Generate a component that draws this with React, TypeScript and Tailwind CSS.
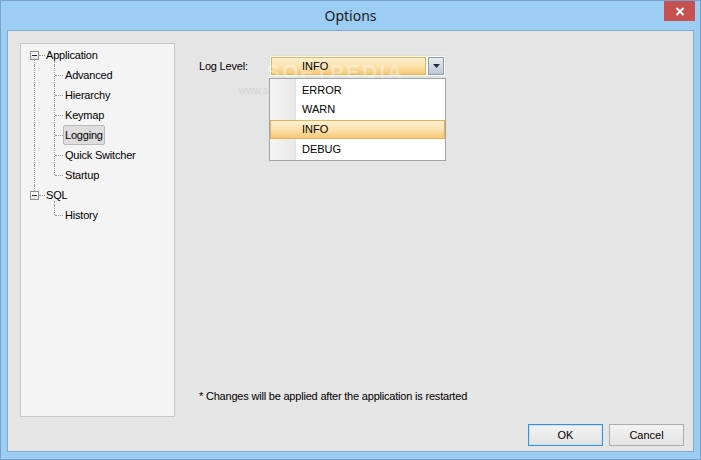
import React from "react";

const font = { fontFamily: '"Liberation Sans", Arial, sans-serif' };

function Expander() {
  return (
    <span className="absolute left-[9px] top-[6px] w-[9px] h-[9px] border border-[#919191] bg-linear-to-b from-white to-[#e4e4e4] flex items-center justify-center">
      <span className="block w-[5px] h-px bg-[#2b2b2b]" />
    </span>
  );
}

type RowProps = {
  label: string;
  root?: boolean;
  rootLine?: "below" | "full" | "above" | "none";
  childLine?: "below" | "full" | "above" | "none";
  selected?: boolean;
};

function Row({ label, root, rootLine = "none", childLine = "none", selected }: RowProps) {
  const vline = (left: string, kind: string) => {
    if (kind === "none") return null;
    const cls =
      kind === "full"
        ? "top-0 h-[20px]"
        : kind === "below"
        ? "top-[16px] h-[4px]"
        : "top-0 h-[10px]";
    return <span className={`absolute ${left} ${cls} w-0 border-l border-dotted border-[#9a9a9a]`} />;
  };
  const rootAbove = rootLine === "above";
  return (
    <div className="relative h-[20px]">
      {rootAbove ? (
        <span className="absolute left-[13px] top-0 h-[6px] w-0 border-l border-dotted border-[#9a9a9a]" />
      ) : (
        vline("left-[13px]", root && rootLine === "below" ? "none" : rootLine)
      )}
      {root && rootLine === "below" && (
        <span className="absolute left-[13px] top-[15px] h-[5px] w-0 border-l border-dotted border-[#9a9a9a]" />
      )}
      {vline("left-[33px]", childLine)}
      {root ? (
        <>
          <Expander />
          <span className="absolute left-[18px] top-[10px] w-[6px] h-0 border-t border-dotted border-[#9a9a9a]" />
          <span className="absolute left-[25px] top-0 h-[20px] flex items-center text-[11px] tracking-[-0.2px] text-black">
            {label}
          </span>
        </>
      ) : (
        <>
          <span className="absolute left-[34px] top-[10px] w-[8px] h-0 border-t border-dotted border-[#9a9a9a]" />
          <span
            className={`absolute left-[42px] top-0 h-[20px] flex items-center text-[11px] tracking-[-0.2px] text-black px-px border ${
              selected ? "border-[#b9b9b9] bg-[#dedede] rounded-[2px]" : "border-transparent"
            }`}
          >
            {label}
          </span>
        </>
      )}
    </div>
  );
}

function Btn({ label, primary }: { label: string; primary?: boolean }) {
  return (
    <div
      className={`w-[75px] h-[22px] flex items-center justify-center text-[11px] text-black bg-linear-to-b from-[#f3f3f3] to-[#e3e3e3] border ${
        primary ? "border-[#3c8fd5] shadow-[inset_0_0_0_1px_#c6e2f8]" : "border-[#adadad]"
      }`}
    >
      {label}
    </div>
  );
}

export default function App() {
  return (
    <div
      className="w-[701px] h-[460px] bg-[#9ccdf3] border border-[#78a2cc] flex flex-col overflow-hidden"
      style={font}
    >
      {/* title bar */}
      <div className="relative h-[29px] flex items-center justify-center shrink-0">
        <span
          className="text-[14px] text-[#1b1b1b] -mt-[1px]"
          style={{ fontFamily: '"Noto Sans", "Open Sans", sans-serif' }}
        >
          Options
        </span>
        <div className="absolute right-[5px] top-0 w-[31px] h-[20px] bg-[#c75050] flex items-center justify-center">
          <svg width="10" height="9" viewBox="0 0 10 9">
            <path d="M1.5 1 L8.5 8 M8.5 1 L1.5 8" stroke="#fff" strokeWidth="2" />
          </svg>
        </div>
      </div>

      {/* client */}
      <div className="flex-1 ml-[6px] mr-[6px] mb-[7px] border border-[#83a8cd] bg-[#e5e5e5] flex">
        {/* tree */}
        <div className="mt-[12px] ml-[12px] w-[155px] h-[374px] border border-[#c6c6c6] bg-[#f4f4f4] pt-px shrink-0">
          <Row label="Application" root rootLine="below" childLine="below" />
          <Row label="Advanced" rootLine="full" childLine="full" />
          <Row label="Hierarchy" rootLine="full" childLine="full" />
          <Row label="Keymap" rootLine="full" childLine="full" />
          <Row label="Logging" rootLine="full" childLine="full" selected />
          <Row label="Quick Switcher" rootLine="full" childLine="full" />
          <Row label="Startup" rootLine="full" childLine="above" />
          <Row label="SQL" root rootLine="above" childLine="below" />
          <Row label="History" childLine="above" />
        </div>

        {/* right */}
        <div className="flex-1 flex flex-col pt-[24px] pl-[24px] pr-[9px] pb-[5px]">
          <div className="relative flex items-center h-[22px]">
            {/* watermark (behind the list) */}
            <span className="absolute left-[40px] top-[28px] text-[10px] text-[#d4d4d4] pointer-events-none">
              www.softpedia.com
            </span>
            <span className="text-[11px] tracking-[-0.2px] text-black w-[70px]">Log Level:</span>
            <div className="relative w-[177px] h-[22px] border border-[#e0e0e0] bg-white p-px flex">
              <div className="relative flex-1 border border-[#e5b356] bg-linear-to-b from-[#fdf0d3] via-[#fbe2ae] to-[#f6c772] flex items-center pl-[30px] text-[11px] text-black">
                <span className="absolute left-[-6px] top-[-2px] text-[21px] tracking-[2px] text-white/35 font-bold pointer-events-none">
                  SOFTPEDIA
                </span>
                <span className="relative">INFO</span>
              </div>
              <div className="w-[16px] ml-[2px] border border-[#8d9bb0] bg-linear-to-b from-[#e8ecf1] to-[#bcc6d3] flex items-center justify-center">
                <svg width="7" height="4" viewBox="0 0 7 4">
                  <path d="M0 0 H7 L3.5 4 Z" fill="#1d2d4a" />
                </svg>
              </div>

              {/* dropdown list overlay */}
              <div className="absolute left-[-1px] top-[22px] w-[177px] h-[83px] border border-[#a3a3a3] bg-white flex flex-col py-px">
                <div className="absolute left-0 top-0 bottom-0 w-[26px] bg-linear-to-r from-[#f5f5f5] to-[#e8e8e8] border-r border-[#e2e3e3]" />
                {["ERROR", "WARN", "INFO", "DEBUG"].map((it) => (
                  <div
                    key={it}
                    className={`relative h-[20px] flex items-center text-[11px] text-black ${
                      it === "INFO"
                        ? "border border-[#e3b35a] bg-linear-to-b from-[#fdf0d3] via-[#fbe2ae] to-[#f6c772] pl-[31px]"
                        : "pl-[32px]"
                    }`}
                  >
                    {it}
                  </div>
                ))}
              </div>
            </div>
          </div>

          <div className="flex-1" />
          <div className="text-[11px] tracking-[-0.2px] text-black mb-[20px]">
            * Changes will be applied after the application is restarted
          </div>
          <div className="flex justify-end gap-[6px]">
            <Btn label="OK" primary />
            <Btn label="Cancel" />
          </div>
        </div>
      </div>
    </div>
  );
}
